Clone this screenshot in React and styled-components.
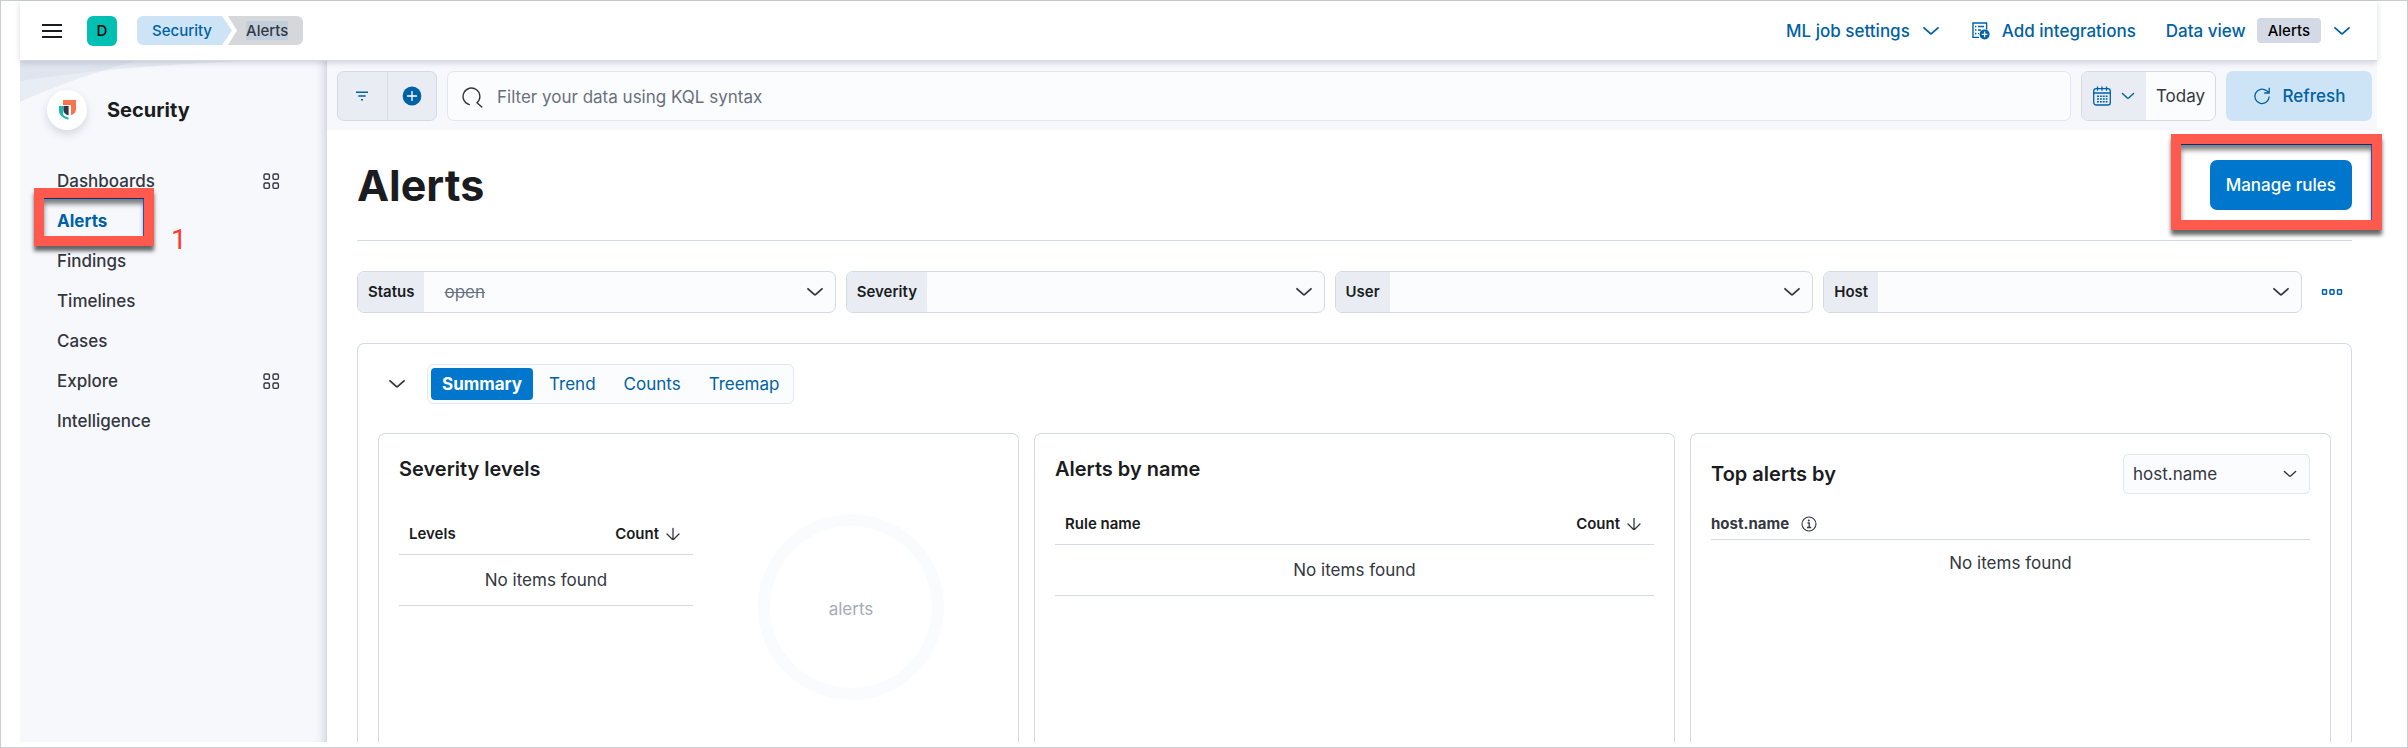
import React, { useState } from 'react';
import styled, { createGlobalStyle, css } from 'styled-components';

const colors = {
  text: '#343741',
  title: '#1a1c21',
  link: '#0061a6',
  primary: '#0077cc',
  border: '#d3dae6',
  subdued: '#69707d',
  page: '#f7f8fc',
  field: '#fbfcfd',
  prepend: '#e9edf3',
  lightBlue: '#cce4f5',
  callout: '#ff5a4d',
};

const GlobalStyle = createGlobalStyle`
  * {
    box-sizing: border-box;
  }

  body {
    margin: 0;
    background: #fff;
    color: ${colors.text};
    font-family: Inter, 'Liberation Sans', sans-serif;
    font-size: 17px;
    line-height: 24px;
  }

  button, input, select {
    font: inherit;
    color: inherit;
    margin: 0;
  }

  button {
    border: 0;
    padding: 0;
    background: none;
    cursor: pointer;
  }

  svg {
    display: block;
    flex: none;
  }
`;

const Frame = styled.div`
  min-height: 100vh;
  display: flex;
  flex-direction: column;
  padding: 0 30px 5px 19px;
  border: 1px solid #c9ccd1;
`;

/* Header */

const Header = styled.header`
  position: relative;
  z-index: 2;
  display: flex;
  align-items: center;
  justify-content: space-between;
  height: 60px;
  padding: 0 25px 0 20px;
  background: #fff;
  border-bottom: 1px solid ${colors.border};
  box-shadow: 0 2px 6px rgba(60, 70, 100, 0.2);
`;

const HeaderSide = styled.div`
  display: flex;
  align-items: center;
  gap: ${props => props.$gap};
`;

const Avatar = styled.button`
  width: 30px;
  height: 30px;
  border-radius: 6px;
  background: #00bfb3;
  color: #000;
  font-size: 15px;
  font-weight: 500;
`;

const Breadcrumbs = styled.nav`
  display: flex;
  align-items: center;
  font-size: 15px;
  font-weight: 500;
  line-height: 29px;
`;

const Crumb = styled.a`
  height: 29px;
  text-decoration: none;
  ${props => props.$current ? css`
    padding: 0 15px 0 18px;
    margin-left: -8px;
    background: #d5d7da;
    color: ${colors.text};
    border-radius: 0 6px 6px 0;
    clip-path: polygon(0 0, 100% 0, 100% 100%, 0 100%, 9px 50%);
  ` : css`
    padding: 0 24px 0 15px;
    background: ${colors.lightBlue};
    color: ${colors.link};
    border-radius: 6px 0 0 6px;
    clip-path: polygon(0 0, calc(100% - 14px) 0, calc(100% - 4px) 50%, calc(100% - 14px) 100%, 0 100%);
  `}
`;

const Marked = styled.span`
  background: #c1cedb;
`;

const HeaderLink = styled.button`
  display: flex;
  align-items: center;
  gap: 11px;
  color: ${colors.link};
  font-weight: 500;
`;

const Badge = styled.span`
  padding: 0 11px;
  border-radius: 4px;
  background: ${colors.border};
  color: #000;
  font-size: 15px;
  font-weight: 500;
  line-height: 25px;
`;

/* Side navigation */

const Body = styled.div`
  flex: 1;
  display: flex;
`;

const Sidebar = styled.aside`
  position: relative;
  flex: none;
  width: 306px;
  padding: 29px 46px 0 27px;
  background: ${colors.page};
  box-shadow: inset -10px 0 10px -8px rgba(60, 70, 100, 0.2);
`;

const Waves = styled.svg`
  position: absolute;
  top: 0;
  left: 0;
`;

const Solution = styled.div`
  position: relative;
  display: flex;
  align-items: center;
  gap: 20px;
  margin-bottom: 31px;
`;

const LogoCircle = styled.span`
  display: flex;
  align-items: center;
  justify-content: center;
  width: 40px;
  height: 40px;
  border-radius: 50%;
  background: #fff;
  box-shadow: 0 4px 8px rgba(60, 70, 100, 0.18);
`;

const SolutionName = styled.h2`
  margin: 0;
  color: ${colors.title};
  font-size: 20px;
  font-weight: 700;
`;

const NavList = styled.ul`
  margin: 0;
  padding: 0 0 0 10px;
  list-style: none;
`;

const NavItem = styled.li`
  position: relative;
  display: flex;
  align-items: center;
  justify-content: space-between;
  height: 40px;
`;

const NavLink = styled.a`
  color: ${props => props.$active ? colors.link : colors.text};
  font-weight: ${props => props.$active ? 700 : 500};
  text-decoration: none;
`;

/* Callouts that lie over the page */

const Callout = styled.span`
  position: absolute;
  z-index: 3;
  border: 10px solid ${colors.callout};
  box-shadow: 0 5px 4px rgba(0, 0, 0, 0.6), inset 0 1px 0 #0b2f78, inset -1px 0 0 #1d55b8, inset 0 6px 5px rgba(0, 0, 0, 0.5);
  pointer-events: none;
`;

const NavCallout = styled(Callout)`
  top: -13px;
  left: -23px;
  width: 120px;
  height: 58px;
`;

const ButtonCallout = styled(Callout)`
  inset: -26px -30px -20px -39px;
`;

const CalloutNumber = styled.span`
  position: absolute;
  z-index: 3;
  top: 24px;
  left: 114px;
  color: #ff3b30;
  font-family: Roboto, sans-serif;
  font-size: 28px;
  line-height: 30px;
`;

/* Main column */

const Main = styled.main`
  flex: 1;
  min-width: 0;
  display: flex;
  flex-direction: column;
  border-left: 1px solid ${colors.border};
`;

const QueryBar = styled.div`
  display: flex;
  gap: 10px;
  padding: 10px 5px 9px 10px;
  background: ${colors.page};
`;

const FilterButtons = styled.div`
  display: flex;
  width: 100px;
  height: 50px;
  border: 1px solid ${colors.border};
  border-radius: 7px;
  background: ${colors.prepend};
`;

const FilterButton = styled.button`
  flex: 1;
  display: flex;
  align-items: center;
  justify-content: center;
  color: ${colors.link};

  & + & {
    border-left: 1px solid ${colors.border};
  }
`;

const SearchBox = styled.label`
  flex: 1;
  display: flex;
  align-items: center;
  gap: 14px;
  padding: 2px 14px 0;
  border: 1px solid #e1e6f0;
  border-radius: 7px;
  background: ${colors.field};
`;

const SearchInput = styled.input`
  flex: 1;
  min-width: 0;
  padding: 0;
  border: 0;
  outline: 0;
  background: none;

  &::placeholder {
    color: ${colors.subdued};
    opacity: 1;
  }
`;

const DatePicker = styled.div`
  display: flex;
  overflow: hidden;
  border: 1px solid ${colors.border};
  border-radius: 7px;
  background: ${colors.field};
`;

const DateQuick = styled.button`
  display: flex;
  align-items: center;
  gap: 8px;
  padding: 0 10px;
  background: ${colors.prepend};
  color: ${colors.link};
`;

const DateValue = styled.button`
  padding: 0 10px;
`;

const RefreshButton = styled.button`
  display: flex;
  align-items: center;
  justify-content: center;
  gap: 12px;
  width: 146px;
  border-radius: 7px;
  background: ${colors.lightBlue};
  color: ${colors.link};
  font-weight: 500;
`;

const Content = styled.div`
  flex: 1;
  display: flex;
  flex-direction: column;
  padding: 30px 25px 0 30px;
`;

const PageHeader = styled.div`
  display: flex;
  align-items: center;
  justify-content: space-between;
  padding-bottom: 30px;
  border-bottom: 1px solid ${colors.border};
`;

const PageTitle = styled.h1`
  margin: 0;
  color: ${colors.title};
  font-size: 43px;
  font-weight: 700;
  line-height: 50px;
`;

const ManageWrap = styled.div`
  position: relative;
`;

const ManageButton = styled.button`
  height: 50px;
  padding: 0 16px;
  border-radius: 7px;
  background: ${colors.primary};
  color: #fff;
  font-weight: 500;
`;

const FilterRow = styled.div`
  display: flex;
  gap: 10px;
  margin: 30px 0;
`;

const FilterField = styled.div`
  flex: 1;
  display: flex;
  height: 42px;
  border: 1px solid ${colors.border};
  border-radius: 7px;
  background: ${colors.field};
  overflow: hidden;
`;

const FilterLabel = styled.label`
  padding: 0 10px;
  background: ${colors.prepend};
  color: ${colors.title};
  font-size: 15px;
  font-weight: 600;
  line-height: 40px;
`;

const SelectWrap = styled.span`
  position: relative;
  flex: 1;
  display: flex;

  svg {
    position: absolute;
    top: 50%;
    right: 10px;
    transform: translateY(-50%);
    pointer-events: none;
  }
`;

const FilterSelect = styled.select`
  appearance: none;
  width: 100%;
  padding: 0 40px 0 20px;
  border: 0;
  outline: 0;
  background: none;
  color: ${colors.subdued};
  text-decoration: line-through;
`;

const MoreButton = styled.button`
  display: flex;
  align-items: center;
  justify-content: center;
  width: 40px;
  color: ${colors.link};
`;

/* Summary panel */

const Panel = styled.section`
  flex: 1;
  display: flex;
  flex-direction: column;
  border: 1px solid ${colors.border};
  border-bottom: 0;
  border-radius: 7px 7px 0 0;
  padding: 20px 20px 0;
`;

const PanelHeader = styled.div`
  display: flex;
  align-items: center;
  gap: 20px;
  padding-left: 9px;
  margin-bottom: 29px;
`;

const Tabs = styled.div`
  display: flex;
  height: 40px;
  padding: 3px 0 3px 3px;
  border: 1px solid #e1e6f0;
  border-radius: 6px;
  background: ${colors.field};
`;

const Tab = styled.button`
  border-radius: 4px;
  ${props => props.$active ? css`
    padding: 0 11px;
    margin-right: 2px;
    background: ${colors.primary};
    color: #fff;
    font-weight: 700;
  ` : css`
    padding: 0 14px;
    color: ${colors.link};
    font-weight: 400;
  `}
`;

const Cards = styled.div`
  flex: 1;
  display: grid;
  grid-template-columns: repeat(3, minmax(0, 1fr));
  gap: 15px;
`;

const Card = styled.section`
  min-height: 309px;
  padding: 20px 20px 0;
  border: 1px solid ${colors.border};
  border-bottom: 0;
  border-radius: 7px 7px 0 0;
`;

const CardTitle = styled.h3`
  margin: 0;
  color: ${colors.title};
  font-size: 20px;
  font-weight: 600;
  line-height: 30px;
`;

const CardHeader = styled.div`
  display: flex;
  align-items: center;
  justify-content: space-between;
  margin-bottom: 18px;
`;

const SeverityGrid = styled.div`
  display: grid;
  grid-template-columns: 1fr 1fr;
  gap: 11px;
  margin-top: 30px;
`;

const Table = styled.table`
  width: 100%;
  border-collapse: collapse;
  align-self: start;
  margin-top: ${props => props.$spaced ? '20px' : '0'};

  th {
    height: 40px;
    padding: 0 10px;
    border-bottom: 1px solid ${colors.border};
    color: ${colors.title};
    font-size: 15px;
    font-weight: 600;
    text-align: left;
  }

  td {
    height: 51px;
    padding: 0;
    border-bottom: 1px solid ${colors.border};
    text-align: center;
  }
`;

const SortButton = styled.button`
  display: flex;
  align-items: center;
  gap: 4px;
  margin-left: auto;
`;

const Donut = styled.div`
  justify-self: center;
  display: flex;
  align-items: center;
  justify-content: center;
  width: 186px;
  height: 186px;
  padding-top: 4px;
  border: 12px solid #fafbfd;
  border-radius: 50%;
  color: #a2abba;
`;

const HostSelectWrap = styled(SelectWrap)`
  flex: none;
  width: 187px;

  svg {
    right: 12px;
  }
`;

const HostSelect = styled.select`
  appearance: none;
  width: 100%;
  height: 40px;
  padding: 0 34px 0 9px;
  border: 1px solid #e1e6f0;
  border-radius: 5px;
  background: ${colors.field};
`;

const GroupName = styled.div`
  display: flex;
  align-items: center;
  gap: 12px;
  padding-bottom: 3px;
  border-bottom: 1px solid ${colors.border};
  font-size: 15px;
  font-weight: 700;
`;

const Empty = styled.p`
  margin: 11px 0 0;
  text-align: center;
`;

/* Icons */

const Chevron = ({ size = 20 }) => (
  <svg width={size} height={size} viewBox="0 0 20 20" fill="none" stroke="currentColor" strokeWidth="1.8" strokeLinecap="round">
    <path d="M3 6.8l6.2 5.6q.8.7 1.6 0L17 6.8" />
  </svg>
);

const MenuIcon = () => (
  <svg width="24" height="20" viewBox="0 0 24 20" fill={colors.title}>
    <path d="M2 3h20v2H2zM2 9h20v2H2zM2 15h20v2H2z" />
  </svg>
);

const IntegrationIcon = () => (
  <svg width="20" height="20" viewBox="0 0 20 20" fill="none" stroke="currentColor" strokeWidth="1.4">
    <path d="M8 16.4H2V2h13.6v6.4M7 5.5h6M7 9h3M7 12.6h1" />
    <path d="M4 5.5h1.4M4 9h1.4M4 12.6h1.4" strokeWidth="1.6" />
    <circle cx="13.6" cy="13.4" r="5" fill="currentColor" stroke="none" />
    <path d="M13.6 10.6v5.6M10.8 13.4h5.6" stroke="#fff" strokeWidth="1.3" />
  </svg>
);

const SecurityLogo = () => (
  <svg width="20" height="22" viewBox="0 0 20 22">
    <path d="M6 1h13v9.5c0 3-2.4 4.900-5 5.800V6H6z" fill="#fa744e" />
    <path d="M2 7h4v7.200c0 2.400 1.700 3.200 5.400 4.100v2.400C5.500 19 2 16 2 12z" fill="#1dbab0" />
    <path d="M6.400 7H11.600v9.400C8 15.600 6.400 13.500 6.400 11z" fill="#343741" />
  </svg>
);

const AppsIcon = () => (
  <svg width="17" height="17" viewBox="0 0 17 17" fill="none" stroke={colors.text} strokeWidth="1.4">
    <rect x="1" y="1" width="5.4" height="5.4" rx="1.4" />
    <rect x="10" y="1" width="5.4" height="5.4" rx="1.4" />
    <rect x="1" y="10" width="5.4" height="5.4" rx="1.4" />
    <rect x="10" y="10" width="5.4" height="5.4" rx="1.4" />
  </svg>
);

const FilterIcon = () => (
  <svg width="16" height="16" viewBox="0 0 16 16" fill="none" stroke="currentColor" strokeWidth="1.4">
    <path d="M2 4.3h12M4.300 8h7.400M7 11.700h2" />
  </svg>
);

const AddFilterIcon = () => (
  <svg width="20" height="20" viewBox="0 0 20 20">
    <circle cx="10" cy="10" r="9.4" fill="currentColor" />
    <path d="M10 5v10M5 10h10" stroke="#fff" strokeWidth="1.3" />
  </svg>
);

const SearchIcon = () => (
  <svg width="21" height="21" viewBox="0 0 21 21" fill="none" stroke={colors.text} strokeWidth="1.4" strokeLinecap="round">
    <path d="M7.300 17.600A8.400 8.400 0 1 1 15 15.800L19.800 20" />
  </svg>
);

const CalendarIcon = () => (
  <svg width="20" height="20" viewBox="0 0 20 20" fill="none" stroke="currentColor" strokeWidth="1.3">
    <rect x="1.7" y="2.7" width="16.6" height="16.3" rx="2.6" />
    <path d="M1.7 7h16.600M5.500.5v4.200M10 .5v4.200M14.500.5v4.200" />
    <path d="M5 10.200h10.500M5 13h10.500M5 15.800h10.500" strokeWidth="1.5" strokeDasharray="1.9 1" />
  </svg>
);

const RefreshIcon = () => (
  <svg width="18" height="18" viewBox="0 0 18 18" fill="none" stroke="currentColor" strokeWidth="1.3">
    <path d="M16.200 9.500A7.200 7.200 0 1 1 13.600 3.800L16 5.800M16.200.8v5.200h-5" />
  </svg>
);

const MoreIcon = () => (
  <svg width="22" height="8" viewBox="0 0 22 8" fill="none" stroke="currentColor" strokeWidth="1.5">
    <rect x="1.5" y="1.8" width="4" height="4.4" rx=".6" />
    <rect x="9" y="1.8" width="4" height="4.4" rx=".6" />
    <rect x="16.5" y="1.8" width="4" height="4.4" rx=".6" />
  </svg>
);

const SortDownIcon = () => (
  <svg width="20" height="20" viewBox="0 0 20 20" fill="none" stroke={colors.text} strokeWidth="1.3" strokeLinecap="round">
    <path d="M10 4.500v11M4 10l5.300 5.200q.7.600 1.400 0L16 10" />
  </svg>
);

const InfoIcon = () => (
  <svg width="16" height="16" viewBox="0 0 16 16" fill="none" stroke={colors.text} strokeWidth="1.1">
    <circle cx="8" cy="8" r="7" />
    <path d="M6.500 7h1.700v4.500M6 11.500h4.200" strokeWidth="1.3" />
    <circle cx="7.8" cy="4.5" r="1" fill={colors.text} stroke="none" />
  </svg>
);

const navItems = [
  { label: 'Dashboards', group: true },
  { label: 'Alerts', active: true },
  { label: 'Findings' },
  { label: 'Timelines' },
  { label: 'Cases' },
  { label: 'Explore', group: true },
  { label: 'Intelligence' },
];

const filters = [
  { label: 'Status', value: 'open' },
  { label: 'Severity', value: '' },
  { label: 'User', value: '' },
  { label: 'Host', value: '' },
];

const tabs = ['Summary', 'Trend', 'Counts', 'Treemap'];

const EmptyTable = ({ name, spaced }) => (
  <Table $spaced={spaced}>
    <thead>
      <tr>
        <th>{name}</th>
        <th>
          <SortButton>Count <SortDownIcon /></SortButton>
        </th>
      </tr>
    </thead>
    <tbody>
      <tr>
        <td colSpan="2">No items found</td>
      </tr>
    </tbody>
  </Table>
);

const SideNav = () => (
  <Sidebar>
    <Waves width="230" height="44" viewBox="0 0 230 44" fill="#d3dae6">
      <path d="M0 0H220Q90 6 0 20z" opacity=".4" />
      <path d="M0 0H116Q50 18 0 41z" opacity=".4" />
    </Waves>
    <Solution>
      <LogoCircle><SecurityLogo /></LogoCircle>
      <SolutionName>Security</SolutionName>
    </Solution>
    <NavList>
      {navItems.map(item => (
        <NavItem key={item.label}>
          <NavLink href="#" $active={item.active}>{item.label}</NavLink>
          {item.group && <AppsIcon />}
          {item.active && (
            <>
              <NavCallout />
              <CalloutNumber>1</CalloutNumber>
            </>
          )}
        </NavItem>
      ))}
    </NavList>
  </Sidebar>
);

const App = () => {
  const [activeTab, setActiveTab] = useState('Summary');
  const [query, setQuery] = useState('');

  return (
    <>
      <GlobalStyle />
      <Frame>
        <Header>
          <HeaderSide $gap="20px">
            <HeaderSide $gap="23px">
              <button aria-label="Toggle navigation"><MenuIcon /></button>
              <Avatar>D</Avatar>
            </HeaderSide>
            <Breadcrumbs>
              <Crumb href="#">Security</Crumb>
              <Crumb href="#" $current><Marked>Alerts</Marked></Crumb>
            </Breadcrumbs>
          </HeaderSide>
          <HeaderSide $gap="30px">
            <HeaderLink>ML job settings <Chevron /></HeaderLink>
            <HeaderLink><IntegrationIcon /> Add integrations</HeaderLink>
            <HeaderLink>Data view <Badge>Alerts</Badge> <Chevron /></HeaderLink>
          </HeaderSide>
        </Header>

        <Body>
          <SideNav />
          <Main>
            <QueryBar>
              <FilterButtons>
                <FilterButton aria-label="Saved queries"><FilterIcon /></FilterButton>
                <FilterButton aria-label="Add filter"><AddFilterIcon /></FilterButton>
              </FilterButtons>
              <SearchBox>
                <SearchIcon />
                <SearchInput
                  aria-label="Search"
                  placeholder="Filter your data using KQL syntax"
                  value={query}
                  onChange={(e) => setQuery(e.target.value)}
                />
              </SearchBox>
              <DatePicker>
                <DateQuick aria-label="Date quick select"><CalendarIcon /><Chevron size={16} /></DateQuick>
                <DateValue>Today</DateValue>
              </DatePicker>
              <RefreshButton><RefreshIcon /> Refresh</RefreshButton>
            </QueryBar>

            <Content>
              <PageHeader>
                <PageTitle>Alerts</PageTitle>
                <ManageWrap>
                  <ManageButton>Manage rules</ManageButton>
                  <ButtonCallout />
                </ManageWrap>
              </PageHeader>

              <FilterRow>
                {filters.map(filter => (
                  <FilterField key={filter.label}>
                    <FilterLabel htmlFor={`filter-${filter.label}`}>{filter.label}</FilterLabel>
                    <SelectWrap>
                      <FilterSelect id={`filter-${filter.label}`}>
                        <option>{filter.value}</option>
                      </FilterSelect>
                      <Chevron />
                    </SelectWrap>
                  </FilterField>
                ))}
                <MoreButton aria-label="More filter actions"><MoreIcon /></MoreButton>
              </FilterRow>

              <Panel>
                <PanelHeader>
                  <button aria-label="Collapse"><Chevron /></button>
                  <Tabs>
                    {tabs.map(tab => (
                      <Tab key={tab} $active={tab === activeTab} onClick={() => setActiveTab(tab)}>{tab}</Tab>
                    ))}
                  </Tabs>
                </PanelHeader>

                <Cards>
                  <Card>
                    <CardTitle>Severity levels</CardTitle>
                    <SeverityGrid>
                      <EmptyTable name="Levels" />
                      <Donut>alerts</Donut>
                    </SeverityGrid>
                  </Card>

                  <Card>
                    <CardTitle>Alerts by name</CardTitle>
                    <EmptyTable name="Rule name" spaced />
                  </Card>

                  <Card>
                    <CardHeader>
                      <CardTitle>Top alerts by</CardTitle>
                      <HostSelectWrap>
                        <HostSelect aria-label="Top alerts by">
                          <option>host.name</option>
                        </HostSelect>
                        <Chevron size={16} />
                      </HostSelectWrap>
                    </CardHeader>
                    <GroupName>host.name <InfoIcon /></GroupName>
                    <Empty>No items found</Empty>
                  </Card>
                </Cards>
              </Panel>
            </Content>
          </Main>
        </Body>
      </Frame>
    </>
  );
};

export default App;
